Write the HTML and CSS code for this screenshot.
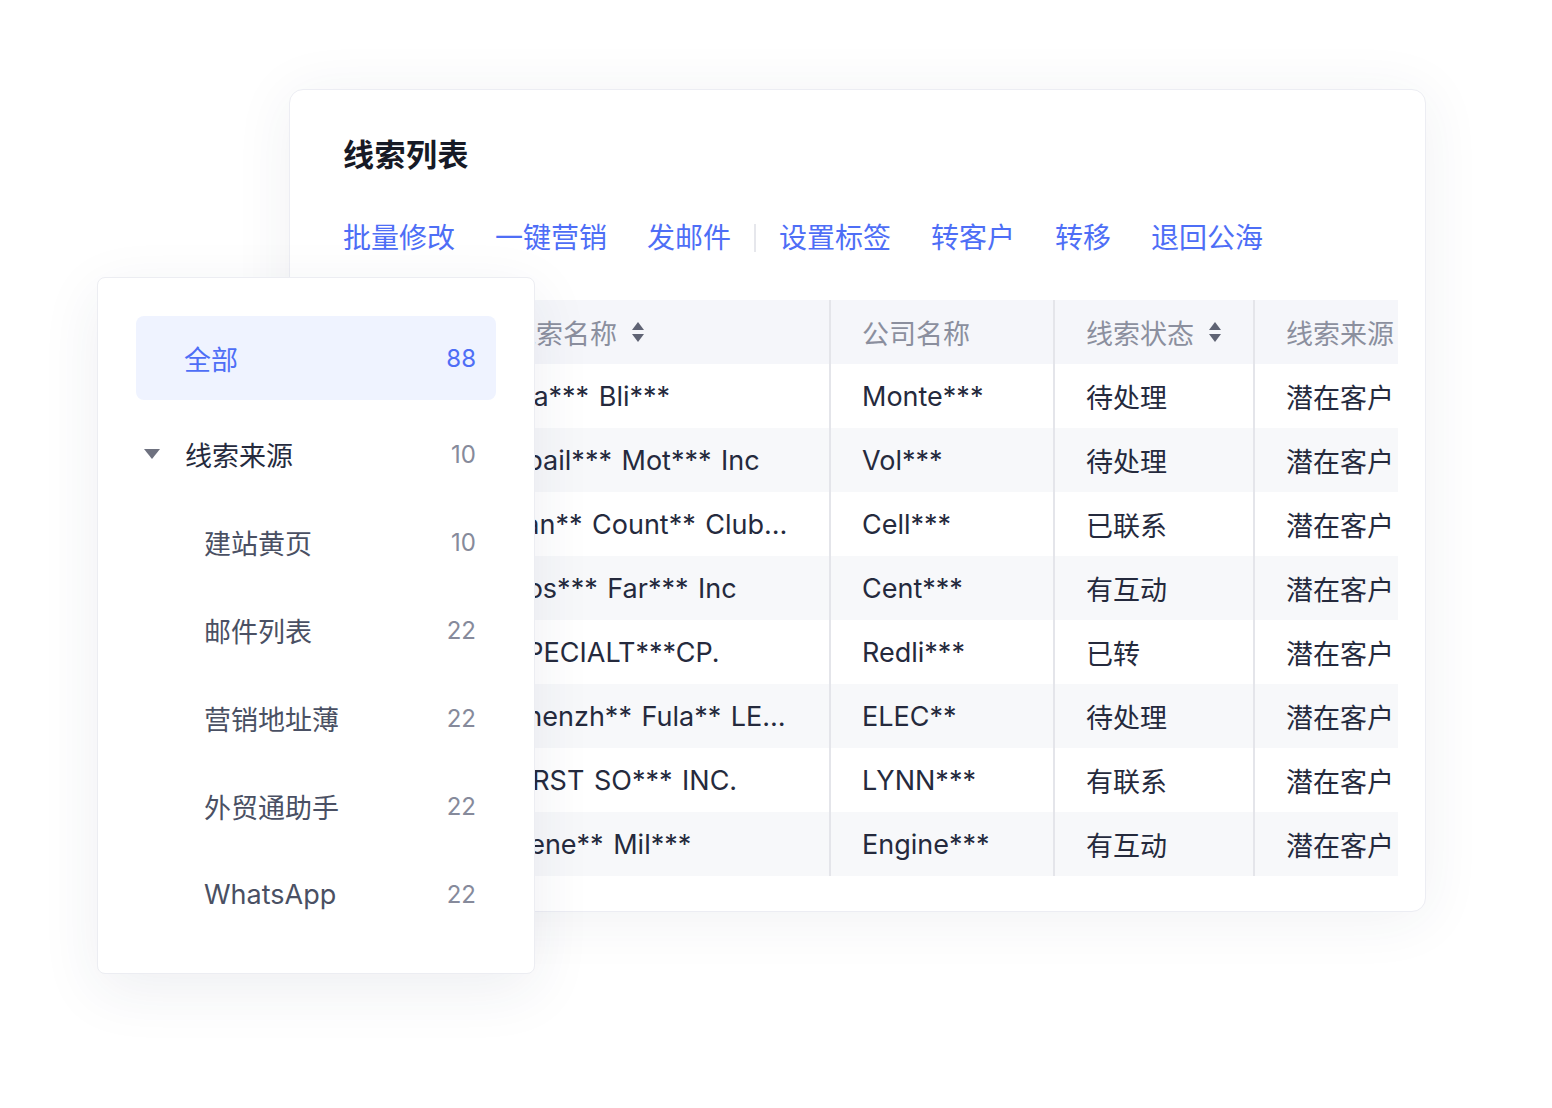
FILE: index.html
```html
<!DOCTYPE html>
<html lang="zh-CN">
<head>
<meta charset="utf-8">
<title>线索列表</title>
<link rel="stylesheet" href="styles.css">
</head>
<body>
<div class="stage">
  <section class="main-card">
    <h1 class="title">线索列表</h1>
    <nav class="actions">
      <a class="action">批量修改</a>
      <a class="action">一键营销</a>
      <a class="action">发邮件</a>
      <span class="sep"></span>
      <a class="action">设置标签</a>
      <a class="action">转客户</a>
      <a class="action">转移</a>
      <a class="action">退回公海</a>
    </nav>
    <div class="table">
      <div class="row head">
        <div class="cell c1">线索名称<svg class="sort" viewBox="0 0 14 22"><path d="M7 1 L13 9 L1 9 Z"/><path d="M1 13 L13 13 L7 21 Z"/></svg></div>
        <div class="cell">公司名称</div>
        <div class="cell">线索状态<svg class="sort" viewBox="0 0 14 22"><path d="M7 1 L13 9 L1 9 Z"/><path d="M1 13 L13 13 L7 21 Z"/></svg></div>
        <div class="cell">线索来源</div>
      </div>
      <div class="row">
        <div class="cell c1">Ma*** Bli***</div>
        <div class="cell">Monte***</div>
        <div class="cell">待处理</div>
        <div class="cell">潜在客户</div>
      </div>
      <div class="row alt">
        <div class="cell c1">Spail*** Mot*** Inc</div>
        <div class="cell">Vol***</div>
        <div class="cell">待处理</div>
        <div class="cell">潜在客户</div>
      </div>
      <div class="row">
        <div class="cell c1">Lan** Count** Club…</div>
        <div class="cell">Cell***</div>
        <div class="cell">已联系</div>
        <div class="cell">潜在客户</div>
      </div>
      <div class="row alt">
        <div class="cell c1">Bos*** Far*** Inc</div>
        <div class="cell">Cent***</div>
        <div class="cell">有互动</div>
        <div class="cell">潜在客户</div>
      </div>
      <div class="row">
        <div class="cell c1">SPECIALT***CP.</div>
        <div class="cell">Redli***</div>
        <div class="cell">已转</div>
        <div class="cell">潜在客户</div>
      </div>
      <div class="row alt">
        <div class="cell c1">Shenzh** Fula** LE…</div>
        <div class="cell">ELEC**</div>
        <div class="cell">待处理</div>
        <div class="cell">潜在客户</div>
      </div>
      <div class="row">
        <div class="cell c1">FIRST SO*** INC.</div>
        <div class="cell">LYNN***</div>
        <div class="cell">有联系</div>
        <div class="cell">潜在客户</div>
      </div>
      <div class="row alt">
        <div class="cell c1">Gene** Mil***</div>
        <div class="cell">Engine***</div>
        <div class="cell">有互动</div>
        <div class="cell">潜在客户</div>
      </div>
    </div>
  </section>

  <aside class="side-card">
    <div class="item active"><span class="label">全部</span><span class="count">88</span></div>
    <div class="item group"><svg class="caret" viewBox="0 0 16 10"><path d="M0 0 L16 0 L8 10 Z"/></svg><span class="label">线索来源</span><span class="count">10</span></div>
    <div class="item sub"><span class="label">建站黄页</span><span class="count">10</span></div>
    <div class="item sub"><span class="label">邮件列表</span><span class="count">22</span></div>
    <div class="item sub"><span class="label">营销地址薄</span><span class="count">22</span></div>
    <div class="item sub"><span class="label">外贸通助手</span><span class="count">22</span></div>
    <div class="item sub"><span class="label">WhatsApp</span><span class="count">22</span></div>
  </aside>
</div>
</body>
</html>
```
FILE: styles.css
```css
* { box-sizing: border-box; }
html, body { margin: 0; padding: 0; background: #ffffff; }
body {
  font-family: "Inter", "Noto Sans CJK SC", sans-serif;
  color: #252a3d;
  width: 1552px;
  height: 1108px;
  overflow: hidden;
}
.stage {
  position: relative;
  width: 1552px;
  height: 1108px;
  padding: 89px 0 0 289px;
}
.main-card {
  width: 1137px;
  height: 823px;
  background: #fff;
  border: 1px solid #ecedf3;
  border-radius: 14px;
  box-shadow: 0 6px 60px rgba(40, 50, 90, 0.07);
  padding: 43px 27px 0 53px;
}
.title {
  margin: 0;
  font-size: 31px;
  line-height: 44px;
  font-weight: 600;
  color: #171a26;
  letter-spacing: 0.5px;
}
.actions {
  margin-top: 41px;
  display: flex;
  align-items: center;
  height: 40px;
}
.action {
  font-size: 28px;
  line-height: 40px;
  color: #4e6ef6;
  margin-right: 40px;
  cursor: pointer;
}
.actions .action:nth-child(3) { margin-right: 23px; }
.sep {
  width: 2px;
  height: 28px;
  background: #e6e7ec;
  margin-right: 23px;
}
.table {
  margin-top: 42px;
  width: 1055px;
  overflow: hidden;
}
.row {
  display: grid;
  grid-template-columns: 486px 224px 200px 145px;
  height: 64px;
  background: #fff;
}
.row.alt { background: #f7f8fa; }
.row.head { background: #f5f6fa; }
.cell {
  display: flex;
  align-items: center;
  font-size: 27px;
  padding-left: 31px;
  border-left: 2px solid #e4e5ea;
  white-space: nowrap;
  overflow: hidden;
  color: #252a3d;
}
.cell.c1 {
  border-left: none;
  padding-left: 166px;
  word-spacing: 2px;
}
.head .cell {
  color: #8b8f9e;
  font-size: 27px;
}
.sort {
  width: 14px;
  height: 22px;
  margin-left: 14px;
  fill: #5f6374;
}
.side-card {
  position: absolute;
  left: 97px;
  top: 277px;
  width: 438px;
  height: 697px;
  background: #fff;
  border: 1px solid #ecedf2;
  border-radius: 8px;
  box-shadow: 0 16px 60px rgba(40, 50, 90, 0.08);
  padding: 38px 38px 0 38px;
}
.item {
  display: flex;
  align-items: center;
  height: 88px;
  padding: 0 20px 0 48px;
  font-size: 27px;
  color: #4a5063;
}
.item .label { flex: 1; }
.item .count {
  font-size: 24px;
  color: #868a9b;
}
.item.active {
  height: 84px;
  background: #eff3ff;
  border-radius: 8px;
  margin-bottom: 10px;
  color: #4e6ef6;
}
.item.active .count { color: #4e6ef6; }
.item.group {
  padding-left: 8px;
  color: #252a3d;
}
.caret {
  width: 16px;
  height: 10px;
  fill: #6e717f;
  margin-right: 25px;
}
.item.sub { padding-left: 68px; }
```
